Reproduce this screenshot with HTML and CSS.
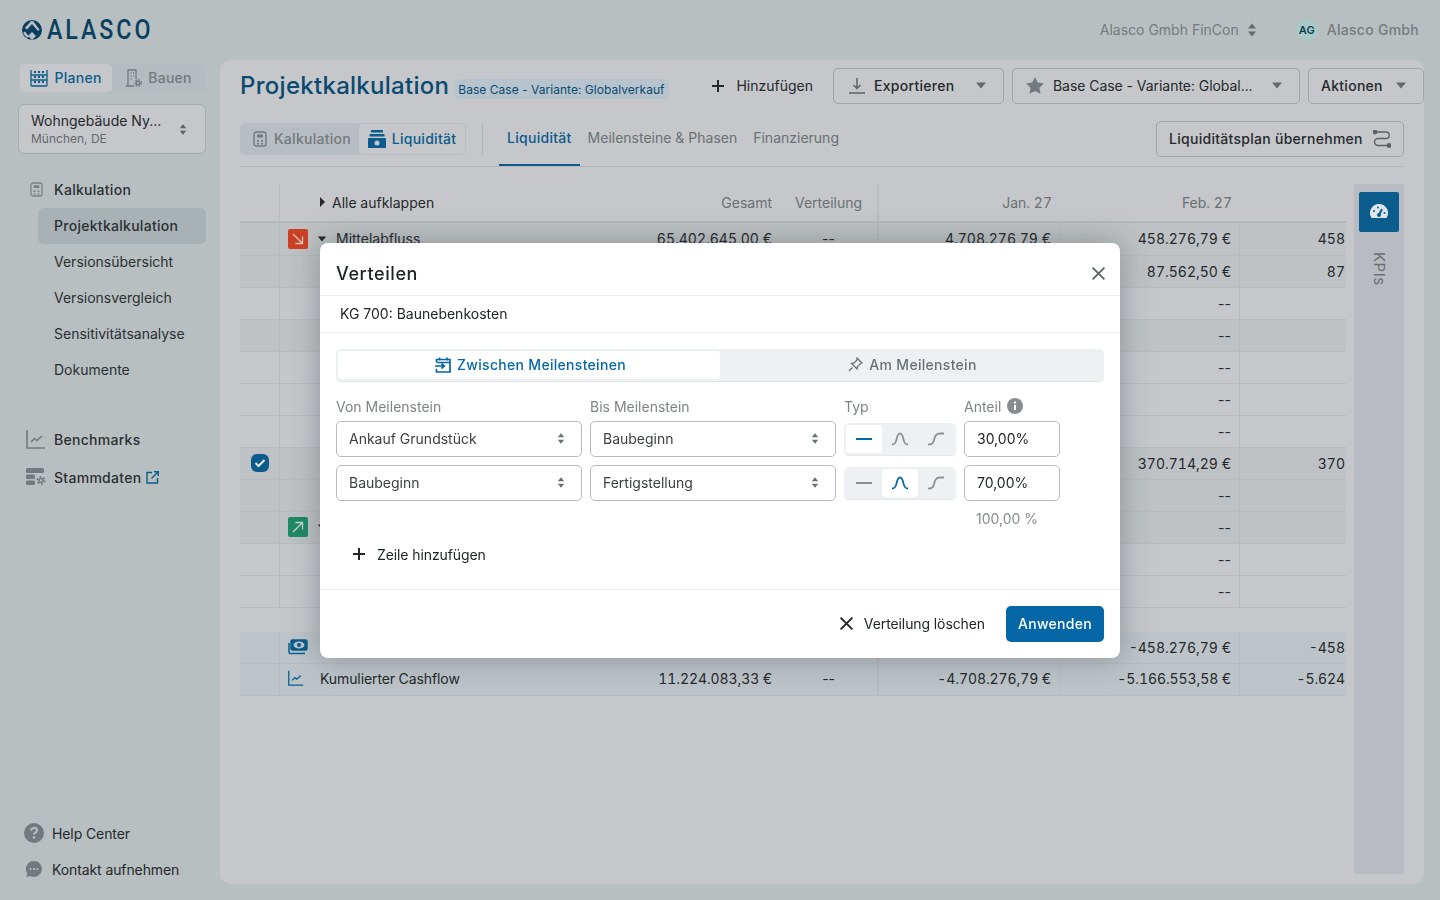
FILE: index.html
```html
<!DOCTYPE html>
<html lang="de">
<head>
    <meta charset="UTF-8">
    <title>Projektkalkulation</title>
    <link rel="stylesheet" href="styles.css">
</head>
<body>
    <svg class="icon-defs" width="0" height="0">
        <symbol id="sort" viewBox="0 0 10 16"><path d="M5 1.500 9 6.500H1zM5 14.500 1 9.500h8z" fill="currentColor"/></symbol>
        <symbol id="caret" viewBox="0 0 12 7"><path d="M1 .5h10L6 6.500z" fill="currentColor"/></symbol>
        <symbol id="plus" viewBox="0 0 14 14"><path d="M7 1v12M1 7h12" stroke="currentColor" stroke-width="2" fill="none"/></symbol>
        <symbol id="close" viewBox="0 0 14 14"><path d="M1.500 1.500l11 11M12.500 1.500l-11 11" stroke="currentColor" stroke-width="1.800" fill="none"/></symbol>
        <symbol id="calc" viewBox="0 0 14 16"><rect x="1" y="1" width="12" height="14" rx="2.500" fill="none" stroke="currentColor" stroke-width="1.400"/><path d="M4 3.500h6v3H4zM4 9h2v1.800H4zM8 9h2v1.800H8zM4 12h2v1.500H4zM8 12h2v1.500H8z" fill="currentColor"/></symbol>
        <symbol id="line" viewBox="0 0 18 14"><path d="M1 7h16" stroke="currentColor" stroke-width="2" fill="none"/></symbol>
        <symbol id="bell" viewBox="0 0 18 14"><path d="M1 12.500c2.500 0 3.500-1 4.500-5C6.300 3.500 7 1.500 9 1.500s2.700 2 3.500 6c1 4 2 5 4.500 5" stroke="currentColor" stroke-width="1.800" fill="none"/></symbol>
        <symbol id="scurve" viewBox="0 0 18 14"><path d="M1 12.500c3.500 0 5-.5 6-4.500C8 4 9 1.500 13 1.500h4" stroke="currentColor" stroke-width="1.800" fill="none"/></symbol>
        <symbol id="chart" viewBox="0 0 20 20"><path d="M1 1v18h18" stroke="currentColor" stroke-width="1.600" fill="none"/><path d="M5 13l3.500-3.500 2.500 2L16 7" stroke="currentColor" stroke-width="1.600" fill="none"/></symbol>
        <symbol id="arrow" viewBox="0 0 20 20"><rect width="20" height="20" rx="2" fill="currentColor"/><path d="M5 5l9 9M14.500 7.500v7h-7" stroke="#e0c8c0" stroke-width="1.300" fill="none"/></symbol>
        <symbol id="arrowup" viewBox="0 0 20 20"><rect width="20" height="20" rx="2" fill="currentColor"/><path d="M5 15l9-9M7.500 5.500h7v7" stroke="#c6d8d0" stroke-width="1.300" fill="none"/></symbol>
    </svg>

    <header class="topbar">
        <div class="logo">
            <svg width="20" height="20" viewBox="0 0 20 20"><circle cx="10" cy="10" r="10" fill="#0b3f5f"/><path d="M9 1 3 8l2 1.500L10 4l6 7 1.500-1.500L11 1zM1 13l4 5 2-1.500-4-5zM10 12l-4 4 4 4 4-4z" fill="#b8bfc0"/></svg>
            <span class="logo-text">ALASCO</span>
        </div>
        <div class="topbar-right">
            <span class="org">Alasco Gmbh FinCon</span>
            <svg class="org-sort" width="10" height="16"><use href="#sort"/></svg>
            <span class="avatar">AG</span>
            <span class="user">Alasco Gmbh</span>
        </div>
    </header>

    <div class="app">
        <aside class="sidebar">
            <div class="mode-switch">
                <div class="mode mode-active">
                    <svg width="18" height="18" viewBox="0 0 18 18" fill="none" stroke="currentColor" stroke-width="1.300"><path d="M1 1v15a1 1 0 0 0 1 1h14a1 1 0 0 0 1-1V1M1 6h16M1 11h16"/><path d="M5 2v13M9 2v13M13 2v13" stroke-dasharray="2 3" stroke-width="2"/></svg>
                    Planen
                </div>
                <div class="mode">
                    <svg width="16" height="18" viewBox="0 0 16 18" fill="none" stroke="currentColor" stroke-width="1.300"><path d="M2 17V1h8v9M0 17h8"/><path d="M4.500 4h1M7 4h1M4.500 7h1M7 7h1M4.500 10h1" stroke-width="1.500"/><circle cx="12" cy="14" r="1.800" stroke-width="1.400"/><circle cx="12" cy="14" r="3.200" stroke-width="1.400" stroke-dasharray="1.500 1.500"/></svg>
                    Bauen
                </div>
            </div>
            <div class="project">
                <div>
                    <div class="project-name">Wohngebäude Ny...</div>
                    <div class="project-place">München, DE</div>
                </div>
                <svg width="8" height="13"><use href="#sort"/></svg>
            </div>
            <nav class="nav">
                <div class="nav-head"><svg class="nav-icon" width="13" height="15"><use href="#calc"/></svg>Kalkulation</div>
                <a class="nav-item nav-item-active">Projektkalkulation</a>
                <a class="nav-item">Versionsübersicht</a>
                <a class="nav-item">Versionsvergleich</a>
                <a class="nav-item">Sensitivitätsanalyse</a>
                <a class="nav-item">Dokumente</a>
                <div class="nav-head nav-benchmarks"><svg class="nav-icon-wide" width="20" height="20"><use href="#chart"/></svg>Benchmarks</div>
                <div class="nav-head nav-stamm">
                    <svg class="nav-icon-wide" width="20" height="18" viewBox="0 0 20 18" fill="currentColor"><rect y="0" width="18" height="5" rx="1.500"/><rect y="6.500" width="9" height="4.500" rx="1.500"/><rect y="12.500" width="9" height="4.500" rx="1.500"/><circle cx="15" cy="12.500" r="2" fill="none" stroke="currentColor" stroke-width="1.600"/><circle cx="15" cy="12.500" r="3.800" fill="none" stroke="currentColor" stroke-width="1.500" stroke-dasharray="1.800 2.200"/></svg>
                    Stammdaten
                    <svg class="external" width="13" height="13" viewBox="0 0 13 13" fill="none" stroke="currentColor" stroke-width="1.400"><path d="M6 1.500H1v10.500h10.500V7M5.500 7.500 12 1M8 .8h4.300v4.300"/></svg>
                </div>
            </nav>
            <div class="side-bottom">
                <div class="side-link">
                    <svg width="20" height="20" viewBox="0 0 20 20"><circle cx="10" cy="10" r="10" fill="#73797d"/><path d="M7 7.500C7 5.800 8.400 5 10 5s3 .9 3 2.400c0 2.100-3 2.100-3 4.100" fill="none" stroke="#b8bfc0" stroke-width="2"/><circle cx="10" cy="14.500" r="1.300" fill="#b8bfc0"/></svg>
                    Help Center
                </div>
                <div class="side-link">
                    <svg width="20" height="20" viewBox="0 0 20 20"><path d="M10 2a8 8 0 1 1-4 15l-3.500 1 .8-3.500A8 8 0 0 1 10 2z" fill="#73797d"/><circle cx="6.500" cy="10" r="1.100" fill="#b8bfc0"/><circle cx="10" cy="10" r="1.100" fill="#b8bfc0"/><circle cx="13.500" cy="10" r="1.100" fill="#b8bfc0"/></svg>
                    Kontakt aufnehmen
                </div>
            </div>
        </aside>

        <main class="panel">
            <div class="title-row">
                <h1>Projektkalkulation</h1>
                <span class="badge">Base Case - Variante: Globalverkauf</span>
                <div class="actions">
                    <button class="link-btn"><svg width="14" height="14"><use href="#plus"/></svg>Hinzufügen</button>
                    <button class="btn btn-export">
                        <svg class="btn-icon" width="16" height="16" viewBox="0 0 16 16" fill="none" stroke="currentColor" stroke-width="1.500"><path d="M0 15h16M8 0v10M4.500 7 8 10.500 11.500 7"/></svg>
                        <b>Exportieren</b>
                        <svg class="btn-caret" width="12" height="7"><use href="#caret"/></svg>
                    </button>
                    <button class="btn btn-variant">
                        <svg class="btn-icon" width="18" height="17" viewBox="0 0 18 17"><path d="M9 0l2.700 5.600 6.200.8-4.500 4.300 1.100 6.100L9 13.900l-5.500 2.900 1.100-6.100L.1 6.400l6.200-.8z" fill="#73797d"/></svg>
                        <span>Base Case - Variante: Global...</span>
                        <svg class="btn-caret" width="12" height="7"><use href="#caret"/></svg>
                    </button>
                    <button class="btn btn-actions">
                        <b>Aktionen</b>
                        <svg class="btn-caret" width="12" height="7"><use href="#caret"/></svg>
                    </button>
                </div>
            </div>

            <div class="tab-row">
                <div class="view-switch">
                    <div class="view view-off"><svg width="14" height="16"><use href="#calc"/></svg>Kalkulation</div>
                    <div class="view view-active">
                        <svg width="18" height="18" viewBox="0 0 18 18" fill="currentColor"><rect x="3" y="0" width="12" height="2.500" rx=".5"/><rect x="1.500" y="4" width="15" height="2.500" rx=".5"/><path d="M1 8h16a1 1 0 0 1 1 1v9H0V9a1 1 0 0 1 1-1z"/><circle cx="9" cy="13" r="2.500" fill="#c5c7ca"/></svg>
                        Liquidität
                    </div>
                </div>
                <div class="tabs">
                    <a class="tab tab-active">Liquidität</a>
                    <a class="tab">Meilensteine &amp; Phasen</a>
                    <a class="tab">Finanzierung</a>
                </div>
                <button class="btn btn-adopt">
                    <b>Liquiditätsplan übernehmen</b>
                    <svg width="18" height="18" viewBox="0 0 18 18" fill="none" stroke="#5c6266" stroke-width="1.400"><circle cx="2" cy="2" r="1.700" fill="#5c6266"/><circle cx="16" cy="15.500" r="1.700" fill="#5c6266"/><path d="M2 2h11a3.200 3.200 0 0 1 0 6.500H5a3.200 3.200 0 0 0 0 7h11"/></svg>
                </button>
            </div>

            <div class="content">
                <div class="table">
                    <div class="row row-head">
                        <div class="cell"></div>
                        <div class="cell cell-name"><svg class="expand" width="7" height="10" viewBox="0 0 7 10"><path d="M1 0l5 5-5 5z" fill="currentColor"/></svg>Alle aufklappen</div>
                        <div class="cell num">Gesamt</div>
                        <div class="cell num-mid">Verteilung</div>
                        <div class="cell num">Jan. 27</div>
                        <div class="cell num">Feb. 27</div>
                        <div class="cell"></div>
                    </div>
                    <div class="row row-first row-tint">
                        <div class="cell"></div>
                        <div class="cell cell-name">
                            <svg class="row-icon row-icon-red" width="20" height="20"><use href="#arrow"/></svg>
                            <svg class="row-caret" width="10" height="6"><use href="#caret"/></svg>Mittelabfluss
                        </div>
                        <div class="cell num">65.402.645,00 €</div>
                        <div class="cell num-mid dash">--</div>
                        <div class="cell num">4.708.276,79 €</div>
                        <div class="cell num">458.276,79 €</div>
                        <div class="cell num">458</div>
                    </div>
                    <div class="row row-tint"><div class="cell"></div><div class="cell"></div><div class="cell"></div><div class="cell"></div><div class="cell"></div><div class="cell num">87.562,50 €</div><div class="cell num">87</div></div>
                    <div class="row"><div class="cell"></div><div class="cell"></div><div class="cell"></div><div class="cell"></div><div class="cell"></div><div class="cell num dash">--</div><div class="cell"></div></div>
                    <div class="row row-tint"><div class="cell"></div><div class="cell"></div><div class="cell"></div><div class="cell"></div><div class="cell"></div><div class="cell num dash">--</div><div class="cell"></div></div>
                    <div class="row"><div class="cell"></div><div class="cell"></div><div class="cell"></div><div class="cell"></div><div class="cell"></div><div class="cell num dash">--</div><div class="cell"></div></div>
                    <div class="row"><div class="cell"></div><div class="cell"></div><div class="cell"></div><div class="cell"></div><div class="cell"></div><div class="cell num dash">--</div><div class="cell"></div></div>
                    <div class="row"><div class="cell"></div><div class="cell"></div><div class="cell"></div><div class="cell"></div><div class="cell"></div><div class="cell num dash">--</div><div class="cell"></div></div>
                    <div class="row row-tint">
                        <div class="cell cell-check"><span class="check"><svg width="12" height="10" viewBox="0 0 12 10"><path d="M1.500 5 4.500 8 10.500 2" stroke="#e8eef0" stroke-width="2" fill="none"/></svg></span></div>
                        <div class="cell"></div><div class="cell"></div><div class="cell"></div><div class="cell"></div>
                        <div class="cell num">370.714,29 €</div><div class="cell num">370</div>
                    </div>
                    <div class="row row-tint"><div class="cell"></div><div class="cell"></div><div class="cell"></div><div class="cell"></div><div class="cell"></div><div class="cell num dash">--</div><div class="cell"></div></div>
                    <div class="row row-tint">
                        <div class="cell"></div>
                        <div class="cell cell-name"><svg class="row-icon row-icon-green" width="20" height="20"><use href="#arrowup"/></svg><svg class="row-caret" width="10" height="6"><use href="#caret"/></svg></div>
                        <div class="cell"></div><div class="cell"></div><div class="cell"></div><div class="cell num dash">--</div><div class="cell"></div>
                    </div>
                    <div class="row"><div class="cell"></div><div class="cell"></div><div class="cell"></div><div class="cell"></div><div class="cell"></div><div class="cell num dash">--</div><div class="cell"></div></div>
                    <div class="row"><div class="cell"></div><div class="cell"></div><div class="cell"></div><div class="cell"></div><div class="cell"></div><div class="cell num dash">--</div><div class="cell"></div></div>
                    <div class="row row-total row-gap">
                        <div class="cell"></div>
                        <div class="cell cell-name">
                            <svg class="row-icon row-icon-blue" width="20" height="16" viewBox="0 0 20 16" fill="none" stroke="currentColor" stroke-width="1.500"><rect x="3" y="1" width="16" height="10" rx="1.500" fill="currentColor"/><ellipse cx="11" cy="6" rx="5.500" ry="3.500" fill="#bcc4c9" stroke="none"/><circle cx="11" cy="6" r="2" fill="currentColor" stroke="none"/><path d="M1 4v9a1.500 1.500 0 0 0 1.500 1.500H17"/></svg>
                        </div>
                        <div class="cell"></div><div class="cell"></div><div class="cell"></div>
                        <div class="cell num">-458.276,79 €</div><div class="cell num">-458</div>
                    </div>
                    <div class="row row-total row-last">
                        <div class="cell"></div>
                        <div class="cell cell-name"><svg class="row-icon row-icon-blue" width="16" height="16"><use href="#chart"/></svg>Kumulierter Cashflow</div>
                        <div class="cell num">11.224.083,33 €</div>
                        <div class="cell num-mid dash">--</div>
                        <div class="cell num">-4.708.276,79 €</div><div class="cell num">-5.166.553,58 €</div><div class="cell num">-5.624</div>
                    </div>
                </div>
                <div class="rail">
                    <div class="rail-btn">
                        <svg width="20" height="18" viewBox="0 0 20 18"><path d="M10 1a9 9 0 0 1 7.500 14H2.500A9 9 0 0 1 10 1z" fill="#dfe6ea"/><path d="M10 12l3-6" stroke="#0b5c8c" stroke-width="2"/><circle cx="10" cy="12" r="2" fill="#0b5c8c"/><circle cx="5" cy="8" r="1" fill="#0b5c8c"/><circle cx="9" cy="4.500" r="1" fill="#0b5c8c"/><circle cx="15.500" cy="10" r="1" fill="#0b5c8c"/></svg>
                    </div>
                    <div class="rail-label">KPIs</div>
                </div>
            </div>
        </main>
    </div>

    <div class="backdrop">
        <div class="modal">
            <div class="modal-head">
                <h2>Verteilen</h2>
                <svg class="modal-close" width="15" height="15"><use href="#close"/></svg>
            </div>
            <div class="modal-sub">KG 700: Baunebenkosten</div>
            <div class="modal-body">
                <div class="segment">
                    <div class="seg seg-active">
                        <svg width="16" height="16" viewBox="0 0 16 16" fill="none" stroke="currentColor" stroke-width="1.700"><path d="M1.500 5V2.500h13.500v12.500H1.500v-3M1.500 5.500h13.500M4.500 .5v3M12 .5v3"/><path d="M0 9h9M6.500 6.500 9.300 9l-2.800 2.500"/></svg>
                        Zwischen Meilensteinen
                    </div>
                    <div class="seg">
                        <svg width="15" height="15" viewBox="0 0 15 15" fill="none" stroke="currentColor" stroke-width="1.300"><path d="M9 1l5 5-1.500 .5-3 3-.5 2.500-5.500-5.500 2.500-.5 3-3zM4.500 10.500 1 14"/></svg>
                        Am Meilenstein
                    </div>
                </div>

                <div class="dist-grid">
                    <div class="lbl">Von Meilenstein</div>
                    <div class="lbl">Bis Meilenstein</div>
                    <div class="lbl">Typ</div>
                    <div class="lbl">Anteil
                        <svg width="16" height="16" viewBox="0 0 16 16"><circle cx="8" cy="8" r="8" fill="#868c90"/><circle cx="8" cy="4.500" r="1.200" fill="#fff"/><path d="M8 7v5" stroke="#fff" stroke-width="2"/></svg>
                    </div>

                    <div class="select">Ankauf Grundstück<svg width="8" height="13"><use href="#sort"/></svg></div>
                    <div class="select">Baubeginn<svg width="8" height="13"><use href="#sort"/></svg></div>
                    <div class="curve-switch">
                        <span class="curve curve-on"><svg width="18" height="14"><use href="#line"/></svg></span>
                        <span class="curve"><svg width="18" height="14"><use href="#bell"/></svg></span>
                        <span class="curve"><svg width="18" height="14"><use href="#scurve"/></svg></span>
                    </div>
                    <div class="amount">30,00%</div>

                    <div class="select">Baubeginn<svg width="8" height="13"><use href="#sort"/></svg></div>
                    <div class="select">Fertigstellung<svg width="8" height="13"><use href="#sort"/></svg></div>
                    <div class="curve-switch">
                        <span class="curve"><svg width="18" height="14"><use href="#line"/></svg></span>
                        <span class="curve curve-on"><svg width="18" height="14"><use href="#bell"/></svg></span>
                        <span class="curve"><svg width="18" height="14"><use href="#scurve"/></svg></span>
                    </div>
                    <div class="amount">70,00%</div>

                    <div class="sum">100,00 %</div>
                </div>

                <button class="add-row"><svg width="14" height="14"><use href="#plus"/></svg>Zeile hinzufügen</button>
            </div>
            <div class="modal-foot">
                <button class="clear"><svg width="15" height="15"><use href="#close"/></svg>Verteilung löschen</button>
                <button class="apply">Anwenden</button>
            </div>
        </div>
    </div>
</body>
</html>
```

FILE: styles.css
```css
* {
    box-sizing: border-box;
}
body {
    margin: 0;
    height: 900px;
    overflow: hidden;
    font-family: Inter, "Noto Sans", sans-serif;
    font-size: 14px;
    color: #25292c;
    background: #b8bfc0;
}
button {
    font: inherit;
    color: inherit;
    background: none;
    border: 0;
    padding: 0;
}
.icon-defs {
    position: absolute;
}

/* top bar */
.topbar {
    height: 60px;
    display: flex;
    align-items: center;
    justify-content: space-between;
    padding: 0 21px 0 22px;
}
.logo {
    display: flex;
    align-items: center;
    gap: 5px;
    color: #0b3f5f;
}
.logo-text {
    font-family: Roboto, sans-serif;
    font-size: 27px;
    font-weight: 500;
    letter-spacing: 3.4px;
    transform: scaleX(.86);
    transform-origin: left center;
    width: 103px;
}
.topbar-right {
    display: flex;
    align-items: center;
    color: #757b7f;
    padding-bottom: 1px;
}
.org-sort {
    margin-left: 8px;
    color: #64696d;
}
.avatar {
    width: 22px;
    height: 22px;
    margin-left: 39px;
    border-radius: 50%;
    background: #a9c9c9;
    color: #0b3f4f;
    font-size: 11px;
    font-weight: 600;
    display: flex;
    align-items: center;
    justify-content: center;
}
.user {
    margin-left: 9px;
    font-weight: 500;
    letter-spacing: .28px;
}

.app {
    display: flex;
    height: 840px;
}

/* sidebar */
.sidebar {
    width: 220px;
    flex: none;
    display: flex;
    flex-direction: column;
    padding: 4px 14px 12px 18px;
}
.mode-switch {
    display: flex;
    margin-left: 2px;
    height: 28px;
    width: 186px;
    background: #b4bcc0;
    border-radius: 4px;
}
.mode {
    flex: 1;
    display: flex;
    align-items: center;
    justify-content: center;
    gap: 6px;
    padding-bottom: 1px;
    color: #73797d;
    font-weight: 500;
    letter-spacing: .28px;
}
.mode-active {
    flex: none;
    width: 92px;
    background: #c5c7ca;
    color: #0b5c8c;
    border-radius: 4px;
}
.project {
    margin-top: 12px;
    height: 50px;
    width: 188px;
    padding: 0 18px 0 12px;
    display: flex;
    align-items: center;
    justify-content: space-between;
    background: #c5c7ca;
    border: 1px solid #a6acae;
    border-radius: 6px;
    color: #5c6266;
}
.project-name {
    color: #25292c;
    line-height: 17px;
    margin-top: -1px;
}
.project-place {
    margin-top: 2px;
    font-size: 12px;
    line-height: 15px;
    color: #64696d;
}
.nav {
    margin-top: 18px;
    display: flex;
    flex-direction: column;
}
.nav-head {
    height: 36px;
    padding-bottom: 2px;
    display: flex;
    align-items: center;
    font-weight: 500;
    letter-spacing: .28px;
    color: #2b3033;
}
.nav-icon {
    margin: 0 11px 0 12px;
    color: #7c8286;
}
.nav-icon-wide {
    margin: 0 8px 0 8px;
    color: #73797d;
}
.nav-benchmarks {
    margin-top: 34px;
}
.nav-stamm {
    margin-top: 2px;
}
.external {
    margin-left: 5px;
    color: #0b5c8c;
}
.nav-item {
    height: 36px;
    margin-left: 20px;
    padding: 0 0 2px 16px;
    display: flex;
    align-items: center;
    color: #2b3033;
    border-radius: 6px;
}
.nav-item-active {
    background: #a8b1b4;
    font-weight: 500;
    letter-spacing: .28px;
}
.side-bottom {
    margin-top: auto;
    display: flex;
    flex-direction: column;
    padding-left: 6px;
}
.side-link {
    height: 36px;
    padding-bottom: 2px;
    display: flex;
    align-items: center;
    gap: 8px;
    letter-spacing: -.1px;
}

/* main panel */
.panel {
    width: 1204px;
    height: 824px;
    padding: 8px 0 10px 20px;
    background: #c5c7ca;
    border-radius: 10px;
    display: flex;
    flex-direction: column;
}
.title-row {
    height: 36px;
    display: flex;
    align-items: center;
}
h1 {
    margin: 0 0 2px;
    font-size: 24px;
    font-weight: 500;
    letter-spacing: .28px;
    color: #0b4a6f;
}
.badge {
    margin: 5px 0 0 5px;
    height: 20px;
    padding: 1px 4px 0;
    display: flex;
    align-items: center;
    border-radius: 5px;
    background: #b7c4ce;
    color: #0b4a6f;
    font-size: 12px;
    letter-spacing: .03px;
}
.actions {
    margin-left: auto;
    display: flex;
    align-items: center;
    gap: 8px;
}
.link-btn {
    display: flex;
    align-items: center;
    gap: 11px;
    margin-right: 12px;
    padding-bottom: 1px;
}
.btn {
    height: 36px;
    display: flex;
    align-items: center;
    border: 1px solid #9fa5a9;
    border-radius: 5px;
    white-space: nowrap;
}
.btn b {
    font-weight: 500;
    letter-spacing: .28px;
}
.btn-icon {
    color: #5c6266;
}
.btn-caret {
    color: #64696d;
    margin-left: auto;
}
.btn-export {
    width: 171px;
    padding: 0 16px 1px 15px;
    gap: 9px;
}
.btn-variant {
    width: 288px;
    padding: 0 16px 1px 13px;
    gap: 9px;
    letter-spacing: -.05px;
}
.btn-actions {
    width: 116px;
    padding: 0 16px 1px 12px;
}
.tab-row {
    margin: 17px 20px 0 0;
    height: 46px;
    display: flex;
    align-items: flex-start;
    border-bottom: 1px solid #b4b8bb;
}
.view-switch {
    margin-top: 2px;
    height: 32px;
    width: 226px;
    display: flex;
    padding: 1px;
    background: #b7bdc2;
    border-radius: 5px;
}
.view {
    flex: 1;
    display: flex;
    align-items: center;
    justify-content: center;
    gap: 7px;
    padding-bottom: 1px;
    font-weight: 500;
    letter-spacing: .28px;
    color: #73797d;
}
.view-off {
    padding-left: 4px;
}
.view-active {
    flex: none;
    width: 106px;
    gap: 6px;
    background: #c5c7ca;
    border-radius: 4px;
    color: #0b5c8c;
}
.tabs {
    margin: 2px 0 0 16px;
    padding-left: 16px;
    height: 32px;
    display: flex;
    border-left: 1px solid #b4b8bb;
}
.tab {
    height: 45px;
    padding: 0 8px 12px;
    margin-top: -2px;
    display: flex;
    align-items: center;
    color: #6a7074;
}
.tab-active {
    color: #0b5c8c;
    font-weight: 500;
    letter-spacing: .28px;
    border-bottom: 2px solid #0b5c8c;
    padding-bottom: 10px;
}
.btn-adopt {
    margin-left: auto;
    width: 248px;
    padding: 0 12px 1px;
    justify-content: space-between;
}
.content {
    margin-top: 17px;
    flex: 1;
    display: flex;
    gap: 8px;
    margin-right: 20px;
    min-height: 0;
}
.table {
    width: 1106px;
}

/* table */
.row {
    display: grid;
    grid-template-columns: 40px 360px 140px 99px 181px 180px 106px;
    height: 32px;
    border-bottom: 1px solid #b8bcbf;
    font-variant-numeric: tabular-nums;
}
.row-head {
    height: 39px;
    border-bottom: 2px solid #b4b8bb;
    color: #6a7074;
}
.row-first {
    height: 33px;
}
.row-tint {
    background: #bec2c4;
}
.row-gap {
    margin-top: 24px;
}
.row-total {
    background: #bcc4c9;
}
.cell {
    min-width: 0;
    padding-bottom: 1px;
    display: flex;
    align-items: center;
    white-space: nowrap;
    border-right: 1px solid #b8bcbf;
}
.row-last .cell {
    padding-bottom: 3px;
    letter-spacing: -.1px;
}
.row .cell:nth-child(2),
.row .cell:nth-child(3),
.row .cell:nth-child(7) {
    border-right: 0;
}
.row .cell:nth-child(4) {
    border-right: 2px solid #b8bcbf;
}
.row-head .cell:nth-child(5),
.row-head .cell:nth-child(6) {
    border-right: 0;
}
.cell-name {
    padding-left: 8px;
}
.row-head .cell-name {
    color: #25292c;
    padding-left: 39px;
}
.expand {
    margin-right: 6px;
    color: #25292c;
}
.row-icon {
    margin-right: 9px;
}
.row-icon-red {
    color: #cc4125;
}
.row-icon-green {
    color: #1f8a65;
}
.row-icon-blue {
    color: #0b5c8c;
    margin-right: 16px;
}
.row-caret {
    margin-right: 9px;
    color: #25292c;
}
.cell-check {
    justify-content: center;
    padding-left: 1px;
}
.check {
    width: 18px;
    height: 18px;
    display: flex;
    align-items: center;
    justify-content: center;
    background: #0b5c8c;
    border-radius: 6px;
}
.num {
    justify-content: flex-end;
    padding-right: 8px;
}
.num-mid {
    justify-content: center;
}
.dash {
    font-variant-numeric: normal;
}
.row .cell:nth-child(7) {
    padding-right: 1px;
}
.rail {
    width: 50px;
    height: 690px;
    padding-top: 8px;
    background: #b8bbc2;
    display: flex;
    flex-direction: column;
    align-items: center;
}
.rail-btn {
    width: 40px;
    height: 40px;
    display: flex;
    align-items: center;
    justify-content: center;
    background: #0b5c8c;
    border-radius: 2px;
}
.rail-label {
    margin-top: 20px;
    writing-mode: vertical-rl;
    font-size: 15px;
    letter-spacing: .5px;
    color: #6a7074;
}

/* dialog */
.backdrop {
    position: fixed;
    inset: 0;
    display: flex;
    align-items: center;
    justify-content: center;
}
.modal {
    width: 800px;
    height: 415px;
    margin-top: 1px;
    background: #fff;
    border-radius: 8px;
    box-shadow: 0 0 30px rgba(40, 48, 54, .35);
    display: flex;
    flex-direction: column;
}
.modal-head {
    height: 53px;
    padding: 8px 14px 0 16px;
    display: flex;
    align-items: center;
    justify-content: space-between;
    border-bottom: 1px solid #eceef0;
}
h2 {
    margin: 0;
    font-size: 18px;
    font-weight: 500;
    letter-spacing: .6px;
    color: #212529;
}
.modal-close {
    color: #5f6569;
}
.modal-sub {
    height: 37px;
    padding: 0 20px 2px;
    display: flex;
    align-items: center;
    border-bottom: 1px solid #eceef0;
    color: #212529;
}
.modal-body {
    flex: 1;
    padding: 16px 16px 0;
}
.segment {
    height: 32px;
    display: flex;
    padding: 2px;
    background: #eef1f4;
    border-radius: 5px;
    box-shadow: 0 1px 1px #dfe3e7;
}
.seg {
    flex: 1;
    display: flex;
    align-items: center;
    justify-content: center;
    gap: 6px;
    padding: 0 0 1px 3px;
    font-weight: 500;
    letter-spacing: .3px;
    color: #6a7074;
}
.seg-active {
    background: #fff;
    color: #0567a6;
    border-radius: 4px;
}
.dist-grid {
    margin-top: 16px;
    display: grid;
    grid-template-columns: 246px 246px 112px 96px;
    grid-template-rows: 16px 36px 36px 20px;
    gap: 8px;
}
.lbl {
    display: flex;
    align-items: center;
    gap: 6px;
    margin-top: 2px;
    color: #7d8488;
}
.select {
    display: flex;
    align-items: center;
    justify-content: space-between;
    padding: 0 16px 1px 12px;
    border: 1px solid #b6bbbf;
    border-radius: 5px;
    color: #3a3f42;
}
.select svg {
    color: #6a7074;
}
.curve-switch {
    margin: 2px 0;
    display: flex;
    padding: 2px;
    background: #eef1f4;
    border-radius: 5px;
    box-shadow: 0 1px 1px #e2e5e9;
}
.curve {
    flex: 1;
    display: flex;
    align-items: center;
    justify-content: center;
    color: #8b9094;
}
.curve-on {
    background: #fff;
    color: #0567a6;
    border-radius: 3px;
}
.amount {
    display: flex;
    align-items: center;
    padding: 0 0 1px 12px;
    border: 1px solid #b6bbbf;
    border-radius: 5px;
    color: #212529;
}
.sum {
    grid-column: 4;
    margin-top: -2px;
    padding-left: 12px;
    color: #868c90;
    display: flex;
    align-items: center;
}
.add-row {
    margin: 7px 0 0 16px;
    height: 36px;
    display: flex;
    align-items: center;
    gap: 11px;
    letter-spacing: -.1px;
    color: #212529;
}
.modal-foot {
    height: 69px;
    padding: 0 16px;
    display: flex;
    align-items: center;
    justify-content: flex-end;
    gap: 21px;
    border-top: 1px solid #eceef0;
}
.clear {
    height: 36px;
    padding-bottom: 2px;
    display: flex;
    align-items: center;
    gap: 10px;
    letter-spacing: -.1px;
    color: #212529;
}
.apply {
    width: 98px;
    height: 36px;
    padding-bottom: 1px;
    background: #0567a6;
    color: #fff;
    font-weight: 500;
    letter-spacing: .28px;
    border-radius: 5px;
}
```
